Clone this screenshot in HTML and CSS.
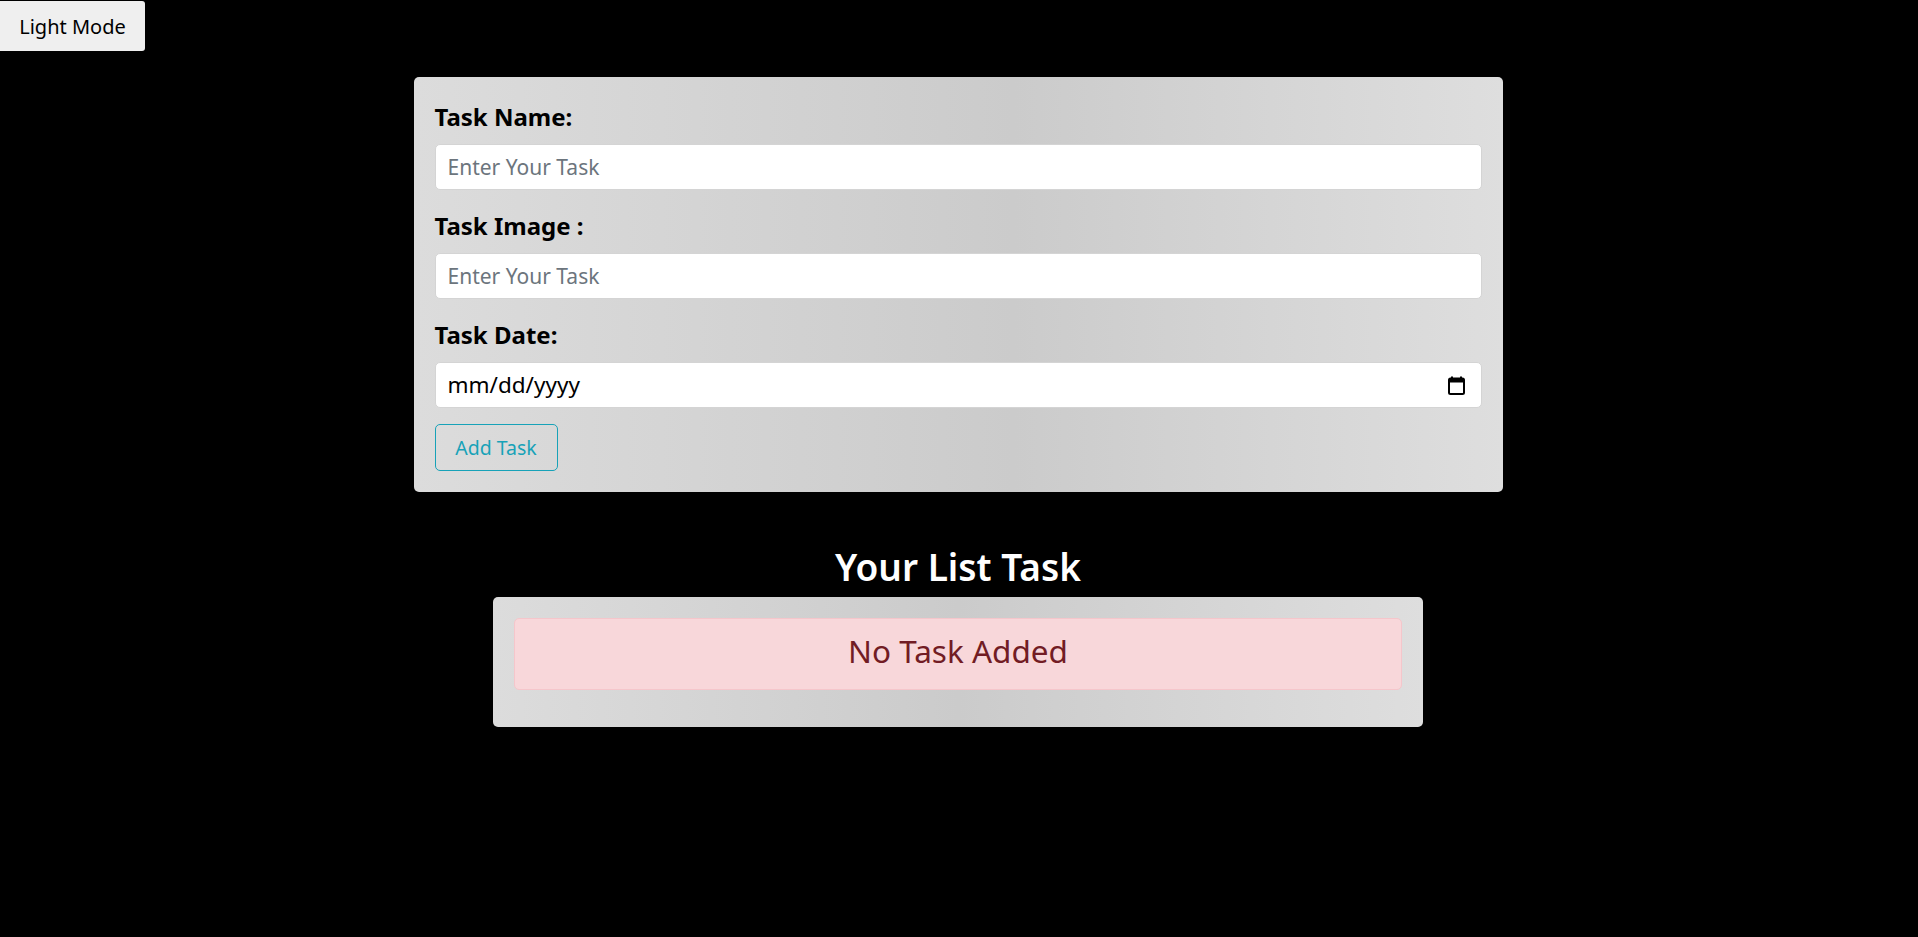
FILE: index.html
```html
<!DOCTYPE html>
<html lang="en">
<head>
<meta charset="utf-8">
<title>Task List</title>
<link rel="stylesheet" href="styles.css">
</head>
<body>
<button class="mode-btn" type="button">Light Mode</button>

<form class="task-form">
  <div class="field">
    <label class="field-label" for="task-name">Task Name:</label>
    <input class="field-input" id="task-name" type="text" placeholder="Enter Your Task">
  </div>
  <div class="field">
    <label class="field-label" for="task-image">Task Image :</label>
    <input class="field-input" id="task-image" type="text" placeholder="Enter Your Task">
  </div>
  <div class="field">
    <label class="field-label" for="task-date">Task Date:</label>
    <div class="field-input date-input" id="task-date">
      <span class="date-text">mm/dd/yyyy</span>
      <svg class="cal-icon" width="17" height="19" viewBox="0 0 17 19" aria-hidden="true">
        <rect x="3" y="0.5" width="2" height="3" fill="#000"/>
        <rect x="12" y="0.5" width="2" height="3" fill="#000"/>
        <rect x="1" y="2.5" width="15" height="15.5" rx="1.5" fill="none" stroke="#000" stroke-width="2"/>
        <rect x="1" y="2.5" width="15" height="4" fill="#000"/>
      </svg>
    </div>
  </div>
  <button class="add-btn" type="button">Add Task</button>
</form>

<h2 class="list-title">Your List Task</h2>
<section class="list-card">
  <div class="alert-empty">No Task Added</div>
</section>
</body>
</html>
```

FILE: styles.css
```css
html, body {
  margin: 0;
  padding: 0;
}
body {
  background: #000;
  font-family: "Noto Sans", "Open Sans", sans-serif;
  color: #212529;
  min-height: 937px;
  padding-right: 2px;
}

.mode-btn {
  display: block;
  margin-top: 1px;
  width: 145px;
  height: 50px;
  padding: 0;
  background: #efefef;
  border: none;
  border-radius: 0 3px 3px 0;
  font-family: "Noto Sans", sans-serif;
  font-size: 20px;
  color: #000;
}

.task-form {
  width: 1089px;
  box-sizing: border-box;
  margin: 26px auto 0;
  padding: 25px 21px 21.5px;
  border-radius: 5px;
  background: linear-gradient(90deg, #dcdcdc 0%, #cbcbcb 55%, #dedede 100%);
}

.field {
  margin-bottom: 21.5px;
}
.field:last-of-type {
  margin-bottom: 0;
}

.field-label {
  display: block;
  font-size: 24px;
  line-height: 30px;
  font-weight: 700;
  color: #000;
  margin-bottom: 11.5px;
}

.field-input {
  display: block;
  width: 100%;
  height: 46px;
  box-sizing: border-box;
  padding: 0 12px;
  border: 1px solid #d4d4d4;
  border-radius: 5px;
  background: #fff;
  font-family: "Noto Sans", sans-serif;
  font-size: 21px;
  color: #212529;
  outline: none;
}
.field-input::placeholder {
  color: #6c757d;
  opacity: 1;
}

.date-input {
  display: flex;
  align-items: center;
  justify-content: space-between;
  padding: 0 16px 0 12px;
}
.date-text {
  color: #000;
  font-size: 22.5px;
}
.cal-icon {
  display: block;
  margin-top: 2px;
}

.add-btn {
  display: block;
  margin-top: 16px;
  width: 123px;
  height: 47px;
  padding: 0;
  background: transparent;
  border: 1px solid #17a2b8;
  border-radius: 5px;
  font-family: "Noto Sans", sans-serif;
  font-size: 19.5px;
  color: #17a2b8;
}

.list-title {
  margin: 53px 0 9px;
  text-align: center;
  font-size: 37px;
  line-height: 43px;
  font-weight: 600;
  color: #fff;
}

.list-card {
  width: 930px;
  box-sizing: border-box;
  margin: 0 auto;
  padding: 21px 21px 37px;
  border-radius: 5px;
  background: linear-gradient(90deg, #dcdcdc 0%, #cbcbcb 50%, #dedede 100%);
}

.alert-empty {
  padding: 14px 20px 20px;
  border: 1px solid #f5c6cb;
  border-radius: 5px;
  background: #f8d7da;
  color: #721c24;
  text-align: center;
  font-size: 31.5px;
  line-height: 36px;
}
```
